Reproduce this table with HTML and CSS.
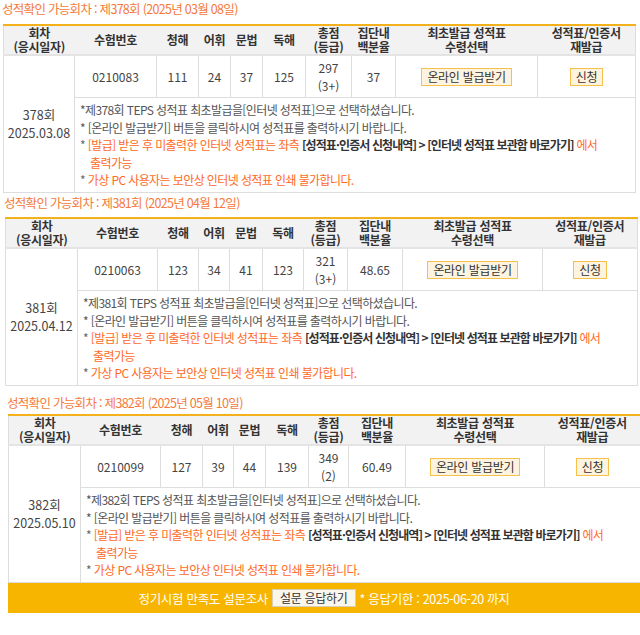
FILE: index.html
```html
<!DOCTYPE html>
<html lang="ko">
<head>
<meta charset="utf-8">
<title>성적확인</title>
<link rel="stylesheet" href="styles.css">
</head>
<body>
<div class="sec s1">
  <div class="title">성적확인 가능회차 : 제378회 (2025년 03월 08일)</div>
  <table class="score">
    <colgroup><col><col><col><col><col><col><col><col><col><col></colgroup>
    <thead>
      <tr><th>회차<br>(응시일자)</th><th>수험번호</th><th>청해</th><th>어휘</th><th>문법</th><th>독해</th><th>총점<br>(등급)</th><th>집단내<br>백분율</th><th>최초발급 성적표<br>수령선택</th><th>성적표/인증서<br>재발급</th></tr>
    </thead>
    <tbody>
      <tr class="data"><td rowspan="2" class="round">378회<br>2025.03.08</td><td>0210083</td><td>111</td><td>24</td><td>37</td><td>125</td><td class="two">297<br>(3+)</td><td>37</td><td><span class="btn">온라인 발급받기</span></td><td><span class="btn">신청</span></td></tr>
      <tr class="notes"><td colspan="9">
        <p>*제378회 TEPS 성적표 최초발급을[인터넷 성적표]으로 선택하셨습니다.</p>
        <p>* [온라인 발급받기] 버튼을 클릭하시여 성적표를 출력하시기 바랍니다.</p>
        <p class="warn"><span class="ast">*</span> [발급] 받은 후 미출력한 인터넷 성적표는 좌측 <b>[성적표·인증서 신청내역] &gt; [인터넷 성적표 보관함 바로가기]</b> 에서 출력가능</p>
        <p class="warn"><span class="ast">*</span> 가상 PC 사용자는 보안상 인터넷 성적표 인쇄 불가합니다.</p>
      </td></tr>
    </tbody>
  </table>
</div>

<div class="sec s2">
  <div class="title">성적확인 가능회차 : 제381회 (2025년 04월 12일)</div>
  <table class="score">
    <colgroup><col><col><col><col><col><col><col><col><col><col></colgroup>
    <thead>
      <tr><th>회차<br>(응시일자)</th><th>수험번호</th><th>청해</th><th>어휘</th><th>문법</th><th>독해</th><th>총점<br>(등급)</th><th>집단내<br>백분율</th><th>최초발급 성적표<br>수령선택</th><th>성적표/인증서<br>재발급</th></tr>
    </thead>
    <tbody>
      <tr class="data"><td rowspan="2" class="round">381회<br>2025.04.12</td><td>0210063</td><td>123</td><td>34</td><td>41</td><td>123</td><td class="two">321<br>(3+)</td><td>48.65</td><td><span class="btn">온라인 발급받기</span></td><td><span class="btn">신청</span></td></tr>
      <tr class="notes"><td colspan="9">
        <p>*제381회 TEPS 성적표 최초발급을[인터넷 성적표]으로 선택하셨습니다.</p>
        <p>* [온라인 발급받기] 버튼을 클릭하시여 성적표를 출력하시기 바랍니다.</p>
        <p class="warn"><span class="ast">*</span> [발급] 받은 후 미출력한 인터넷 성적표는 좌측 <b>[성적표·인증서 신청내역] &gt; [인터넷 성적표 보관함 바로가기]</b> 에서 출력가능</p>
        <p class="warn"><span class="ast">*</span> 가상 PC 사용자는 보안상 인터넷 성적표 인쇄 불가합니다.</p>
      </td></tr>
    </tbody>
  </table>
</div>

<div class="sec s3">
  <div class="title">성적확인 가능회차 : 제382회 (2025년 05월 10일)</div>
  <table class="score">
    <colgroup><col><col><col><col><col><col><col><col><col><col></colgroup>
    <thead>
      <tr><th>회차<br>(응시일자)</th><th>수험번호</th><th>청해</th><th>어휘</th><th>문법</th><th>독해</th><th>총점<br>(등급)</th><th>집단내<br>백분율</th><th>최초발급 성적표<br>수령선택</th><th>성적표/인증서<br>재발급</th></tr>
    </thead>
    <tbody>
      <tr class="data"><td rowspan="2" class="round">382회<br>2025.05.10</td><td>0210099</td><td>127</td><td>39</td><td>44</td><td>139</td><td class="two">349<br>(2)</td><td>60.49</td><td><span class="btn">온라인 발급받기</span></td><td><span class="btn">신청</span></td></tr>
      <tr class="notes"><td colspan="9">
        <p>*제382회 TEPS 성적표 최초발급을[인터넷 성적표]으로 선택하셨습니다.</p>
        <p>* [온라인 발급받기] 버튼을 클릭하시여 성적표를 출력하시기 바랍니다.</p>
        <p class="warn"><span class="ast">*</span> [발급] 받은 후 미출력한 인터넷 성적표는 좌측 <b>[성적표·인증서 신청내역] &gt; [인터넷 성적표 보관함 바로가기]</b> 에서 출력가능</p>
        <p class="warn"><span class="ast">*</span> 가상 PC 사용자는 보안상 인터넷 성적표 인쇄 불가합니다.</p>
      </td></tr>
    </tbody>
  </table>
  <div class="survey">
    <span>정기시험 만족도 설문조사</span>
    <span class="sbtn">설문 응답하기</span>
    <span>* 응답기한 : 2025-06-20 까지</span>
  </div>
</div>
</body>
</html>
```

FILE: styles.css
```css
html, body {
  margin: 0;
  padding: 0;
  background: #fff;
}
body {
  font-family: "Noto Sans CJK KR", "Noto Sans", sans-serif;
  font-size: 12px;
  color: #444;
  overflow: hidden;
}
.sec {
  width: 632px;
}
.s1 { margin-left: 3px; }
.s2 { margin-left: 5px; }
.s3 { margin-left: 8px; }

.title {
  color: #f5793b;
  font-size: 12.5px;
  letter-spacing: -0.7px;
  line-height: 18px;
  height: 24px;
  box-sizing: border-box;
  margin-left: -1px;
}
.s2 .title { padding-top: 1px; }
.s3 .title { padding-top: 8px; height: 28px; }

.score {
  width: 632px;
  border-collapse: collapse;
  table-layout: fixed;
  border-top: 2px solid #f3b21b;
  border-left: 1px solid #ddd;
  border-right: 1px solid #ddd;
  border-bottom: 1px solid #ddd;
}
.score th {
  background: #f2f2f2;
  color: #333;
  font-weight: bold;
  font-size: 12px;
  letter-spacing: -0.3px;
  line-height: 14px;
  height: 28px;
  padding: 0;
  text-align: center;
  vertical-align: middle;
  border-bottom: 2px solid #e4e4e4;
}
.score td {
  border: 1px solid #ddd;
  text-align: center;
  padding: 0;
  color: #444;
}
.data td {
  height: 41px;
  line-height: 18px;
}
.round {
  line-height: 20px;
  font-size: 12.5px;
}
.btn {
  display: inline-block;
  background: #fdf3df;
  border: 1px solid #f4c24a;
  color: #333;
  line-height: 16px;
  padding: 0 5px;
  letter-spacing: -0.3px;
}
.notes td {
  text-align: left;
  height: 88px;
  padding: 3px 0 3px 5px;
  vertical-align: top;
}
.notes p {
  margin: 0;
  line-height: 17.5px;
  color: #555;
  padding-left: 10px;
  text-indent: -10px;
  letter-spacing: -0.6px;
  word-break: keep-all;
}
.notes p.warn {
  color: #ff6a1f;
}
.notes .ast {
  color: #666;
}
.notes b {
  color: #333;
  letter-spacing: -0.9px;
}

.s1 col:nth-child(1) { width: 71px; }
.s1 col:nth-child(2) { width: 82px; }
.s1 col:nth-child(3) { width: 42px; }
.s1 col:nth-child(4) { width: 32px; }
.s1 col:nth-child(5) { width: 32px; }
.s1 col:nth-child(6) { width: 43px; }
.s1 col:nth-child(7) { width: 46px; }
.s1 col:nth-child(8) { width: 44px; }
.s1 col:nth-child(9) { width: 142px; }
.s1 col:nth-child(10) { width: 98px; }

.s2 col:nth-child(1) { width: 72px; }
.s2 col:nth-child(2) { width: 80px; }
.s2 col:nth-child(3) { width: 41px; }
.s2 col:nth-child(4) { width: 31px; }
.s2 col:nth-child(5) { width: 33px; }
.s2 col:nth-child(6) { width: 41px; }
.s2 col:nth-child(7) { width: 44px; }
.s2 col:nth-child(8) { width: 55px; }
.s2 col:nth-child(9) { width: 140px; }
.s2 col:nth-child(10) { width: 95px; }

.s3 col:nth-child(1) { width: 72px; }
.s3 col:nth-child(2) { width: 80px; }
.s3 col:nth-child(3) { width: 42px; }
.s3 col:nth-child(4) { width: 31px; }
.s3 col:nth-child(5) { width: 32px; }
.s3 col:nth-child(6) { width: 43px; }
.s3 col:nth-child(7) { width: 40px; }
.s3 col:nth-child(8) { width: 57px; }
.s3 col:nth-child(9) { width: 139px; }
.s3 col:nth-child(10) { width: 96px; }

.survey {
  background: #f7b500;
  height: 30px;
  display: flex;
  align-items: center;
  justify-content: center;
  gap: 4px;
  color: #fff;
  font-size: 12.5px;
  letter-spacing: -0.3px;
}
.sbtn {
  background: #faf6ec;
  border: 1px solid #d9cfb5;
  color: #333;
  line-height: 16px;
  padding: 0 7px;
  font-size: 12px;
}
```
